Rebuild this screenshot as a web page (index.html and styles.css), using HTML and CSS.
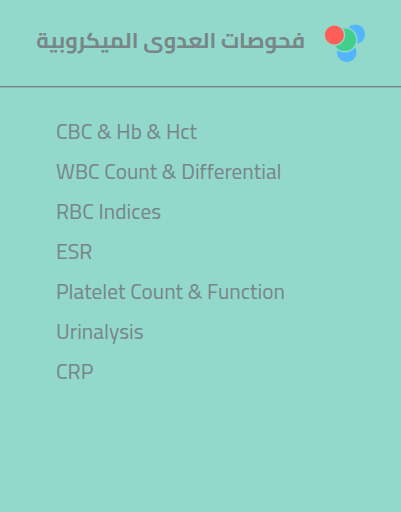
FILE: index.html
```html
<!DOCTYPE html>
<html lang="ar" dir="rtl">
<head>
  <meta charset="UTF-8" />
  <meta name="viewport" content="width=device-width, initial-scale=1" />
  <title>فحوصات العدوى الميكروبية</title>
  <link rel="stylesheet" href="styles.css">
</head>
<body>
  <div class="card">
    <header class="card-header">
      <svg class="icon" width="42" height="40" viewBox="0 0 42 40">
        <circle cx="30.3" cy="10.2" r="9.8" fill="#54b5ff" />
        <circle cx="21.7" cy="28.4" r="9.8" fill="#54b5ff" />
        <circle cx="19.8" cy="15.8" r="12" fill="#41cf8b" stroke="#92d9cb" stroke-width="1.4" />
        <circle cx="9.4" cy="11" r="10.2" fill="#ff5e57" stroke="#92d9cb" stroke-width="1.4" />
      </svg>
      <h1>فحوصات العدوى الميكروبية</h1>
    </header>
    <ul class="tests" dir="ltr">
      <li>CBC &amp; Hb &amp; Hct</li>
      <li>WBC Count &amp; Differential</li>
      <li>RBC Indices</li>
      <li>ESR</li>
      <li>Platelet Count &amp; Function</li>
      <li>Urinalysis</li>
      <li>CRP</li>
    </ul>
  </div>
</body>
</html>
```
FILE: styles.css
```css
* {
  box-sizing: border-box;
  margin: 0;
  padding: 0;
}

body {
  font-family: Cairo, Roboto, "DejaVu Sans", sans-serif;
  background-color: #92d9cb;
  color: #788688;
}

.card {
  min-height: 512px;
}

.card-header {
  display: flex;
  align-items: center;
  gap: 20px;
  height: 88px;
  padding-right: 34px;
  border-bottom: 1px solid #88b5ae;
  box-shadow: inset 0 -1px #788688;
}

.icon {
  flex-shrink: 0;
}

h1 {
  font-size: 21.6px;
  font-weight: bold;
  line-height: 40px;
  white-space: nowrap;
  padding-bottom: 8px;
}

.tests {
  list-style: none;
  padding: 23px 56px;
}

.tests li {
  font-size: 21.3px;
  font-weight: 380;
  line-height: 40px;
  white-space: nowrap;
}
```
